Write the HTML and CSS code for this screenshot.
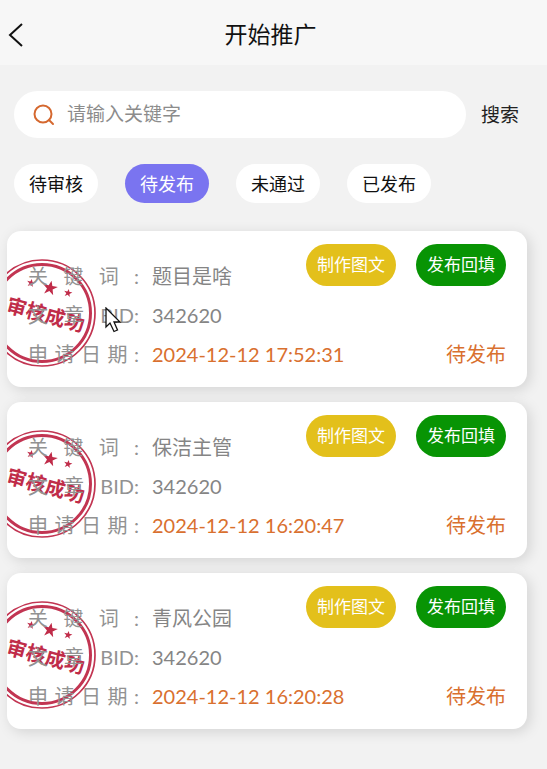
FILE: index.html
```html
<!DOCTYPE html>
<html lang="zh-CN">
<head>
  <meta charset="UTF-8">
  <meta name="viewport" content="width=device-width, initial-scale=1.0">
  <title>开始推广</title>
  <link rel="stylesheet" href="styles.css">
</head>
<body>
  <header class="navbar">
    <button class="back" type="button" aria-label="返回">
      <svg width="16" height="26" viewBox="0 0 16 26"><path d="M14 2L2 13L14 24" fill="none" stroke="#111" stroke-width="2"/></svg>
    </button>
    <h1>开始推广</h1>
  </header>

  <main>
    <form class="search">
      <label class="search-box">
        <svg width="22" height="22" viewBox="0 0 22 22" fill="none" stroke="#d5682f" stroke-width="2"><circle cx="10" cy="10" r="8.500"/><path d="M16 16L20 20" stroke-linecap="round"/></svg>
        <input type="text" placeholder="请输入关键字" aria-label="关键字">
      </label>
      <button type="submit">搜索</button>
    </form>

    <nav class="tabs">
      <button type="button">待审核</button>
      <button type="button" class="active">待发布</button>
      <button type="button">未通过</button>
      <button type="button">已发布</button>
    </nav>

    <div id="list" class="list"></div>
  </main>

  <svg class="pointer" width="17" height="26" viewBox="0 0 17 26"><path d="M1 1V20L5 16L9 24.500L12.500 23L9 15H15Z" fill="#fff" stroke="#111" stroke-width="1.300"/></svg>

  <script>
    const items = [
      { keyword: "题目是啥", bid: "342620", date: "2024-12-12 17:52:31" },
      { keyword: "保洁主管", bid: "342620", date: "2024-12-12 16:20:47" },
      { keyword: "青风公园", bid: "342620", date: "2024-12-12 16:20:28" }
    ];

    const star = "M0 -6L1.500 -2H6L2.300 0.800L3.700 5.200L0 2.500L-3.700 5.200L-2.300 0.800L-6 -2H-1.500Z";

    const stamp = `
      <svg class="stamp" viewBox="0 0 108 108">
        <g fill="none" stroke="#c23552">
          <circle cx="54" cy="54" r="53" stroke-width="1.700"/>
          <circle cx="54" cy="54" r="48.500" stroke-width="3"/>
        </g>
        <g fill="#c02c49">
          <path d="${star}" transform="translate(43 24) rotate(12) scale(0.700)"/>
          <path d="${star}" transform="translate(62 29) rotate(12) scale(1.250)"/>
          <path d="${star}" transform="translate(80 34) rotate(12) scale(0.700)"/>
          <text x="58" y="62" transform="rotate(15 54 54)" text-anchor="middle">审核成功</text>
        </g>
      </svg>`;

    document.getElementById("list").innerHTML = items.map((item) => `
      <article class="card">
        ${stamp}
        <div class="row row-top">
          <span class="label">关键词:</span>
          <span class="value">${item.keyword}</span>
          <div class="actions">
            <button type="button" class="make">制作图文</button>
            <button type="button" class="fill">发布回填</button>
          </div>
        </div>
        <div class="row">
          <span class="label">文章BID:</span>
          <span class="value">${item.bid}</span>
        </div>
        <div class="row">
          <span class="label">申请日期:</span>
          <span class="value date">${item.date}</span>
          <span class="status">待发布</span>
        </div>
      </article>
    `).join("");
  </script>
</body>
</html>
```
FILE: styles.css
```css
* { box-sizing: border-box; }
body { margin: 0; background: #f2f2f2; color: #222; font-family: Lato, "Noto Sans CJK SC", sans-serif; font-size: 20px; }
button, input { font: inherit; color: inherit; border: 0; background: none; padding: 0 0 2px; }
button { cursor: pointer; white-space: nowrap; }
svg { display: block; flex-shrink: 0; }

.navbar { display: grid; grid-template-columns: 40px 1fr 46px; align-items: center; height: 65px; padding-top: 4px; background: #f7f7f7; }
.back { padding: 0 0 0 8px; }
h1 { margin: 0; padding-bottom: 2px; font-size: 23px; line-height: 32px; font-weight: 400; text-align: center; color: #111; }

.search { display: flex; align-items: center; gap: 15px; padding: 26px 28px 0 14px; font-size: 19px; }
.search-box { flex: 1; display: flex; align-items: center; gap: 12px; height: 47px; padding: 0 19px; border-radius: 24px; background: #fff; }
.search-box input { flex: 1; min-width: 0; outline: none; }
.search-box input::placeholder { color: #8c8c8c; }

.tabs { display: flex; gap: 27px; padding: 26px 14px 0; }
.tabs button { height: 39px; padding: 0 15px 2px; border-radius: 20px; background: #fff; font-size: 18px; color: #111; }
.tabs .active { background: #7a74f0; color: #fff; }

.list { display: flex; flex-direction: column; gap: 15px; padding: 28px 20px 40px 7px; }
.card { position: relative; overflow: hidden; padding: 13px 21px; border-radius: 14px; background: #fff; box-shadow: 3px 3px 14px rgba(0, 0, 0, 0.13); }
.row { position: relative; display: flex; line-height: 39px; color: #858585; }
.row-top { height: 52px; }
.row-top .label, .row-top .value { align-self: flex-end; }
.label { width: 111px; margin-right: 13px; text-align-last: justify; color: #929292; }
.date, .status { color: #d9702f; }
.status { margin-left: auto; }

.actions { display: flex; gap: 20px; margin-left: auto; }
.actions button { height: 42px; padding: 0 11px 2px; border-radius: 21px; color: #fff; font-size: 17px; }
.make { background: #e3c01b; }
.fill { background: #089404; }

/* sits under the row text and is cut by the card edge */
.stamp { position: absolute; left: -19px; top: 28px; width: 108px; height: 108px; }
.stamp text { font-family: "Liberation Serif", "Noto Sans CJK SC", serif; font-size: 20px; font-weight: 700; }

.pointer { position: absolute; left: 105px; top: 307px; }
```
